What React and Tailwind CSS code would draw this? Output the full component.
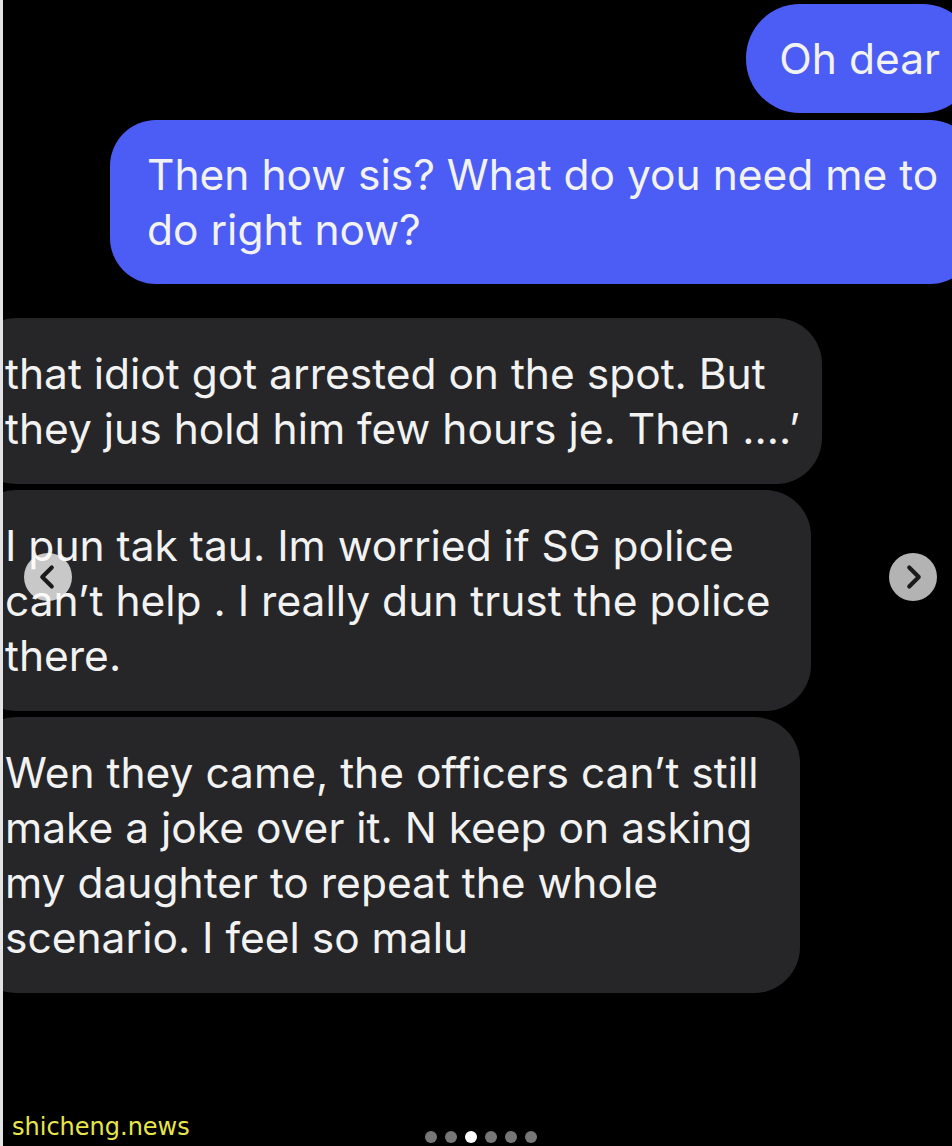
import { ChevronLeft, ChevronRight } from 'lucide-react';

const sent = [
  { lines: ['Oh dear'], box: 'rounded-[54px] pl-[33px] pr-[36px]' },
  { lines: ['Then how sis? What do you need me to', 'do right now?'], box: 'w-[866px] rounded-[46px] pl-[37px]' },
];

const received = [
  { lines: ['that idiot got arrested on the spot. But', 'they jus hold him few hours je. Then ....\u2019'], width: 'w-[852px]' },
  { lines: ['I pun tak tau. Im worried if SG police', 'can\u2019t help . I really dun trust the police', 'there.'], width: 'w-[841px]' },
  {
    lines: ['Wen they came, the officers can\u2019t still', 'make a joke over it. N keep on asking', 'my daughter to repeat the whole', 'scenario. I feel so malu'],
    width: 'w-[830px]',
  },
];

const Lines = ({ lines }) =>
  lines.map((line, i) => (
    <div key={i} className="whitespace-nowrap">
      {line}
    </div>
  ));

export default function App() {
  return (
    <div className="relative h-[1146px] w-[952px] overflow-hidden bg-black font-['Inter',sans-serif] text-[42.5px] leading-[55px] text-[#f2f2f2]">
      <div className="flex flex-col pt-[4px]">
        <div className="flex flex-col items-end gap-[7px]">
          {sent.map((msg, i) => (
            <div key={i} className={`-mr-[24px] bg-[#4c5df5] py-[27px] ${msg.box}`}>
              <Lines lines={msg.lines} />
            </div>
          ))}
        </div>

        <div className="mt-[34px] flex flex-col items-start gap-[6px]">
          {received.map((msg, i) => (
            <div key={i} className={`-ml-[30px] rounded-[46px] bg-[#262628] py-[28px] pl-[35px] ${msg.width}`}>
              <Lines lines={msg.lines} />
            </div>
          ))}
        </div>
      </div>

      {/* carousel controls */}
      <button className="absolute left-[24px] top-[553px] flex h-[48px] w-[48px] items-center justify-center rounded-full bg-white/75 text-[#1a1a1a]">
        <ChevronLeft className="-ml-[2px] h-[38px] w-[38px]" strokeWidth={2.6} />
      </button>
      <button className="absolute left-[889px] top-[553px] flex h-[48px] w-[48px] items-center justify-center rounded-full bg-white/70 text-[#1a1a1a]">
        <ChevronRight className="ml-[2px] h-[38px] w-[38px]" strokeWidth={2.6} />
      </button>

      <div className="absolute bottom-[3px] left-[12px] font-['DejaVu_Sans',sans-serif] text-[24px] leading-[32px] text-[#e8e64a]">
        shicheng.news
      </div>

      <div className="absolute bottom-[3px] left-[425px] flex gap-[8px]">
        {[0, 1, 2, 3, 4, 5].map((i) => (
          <span key={i} className={`h-[12px] w-[12px] rounded-full ${i === 2 ? 'bg-white' : 'bg-[#777777]'}`} />
        ))}
      </div>

      <div className="absolute inset-y-0 left-0 w-[3px] bg-[#e4e4e4]" />
    </div>
  );
}
